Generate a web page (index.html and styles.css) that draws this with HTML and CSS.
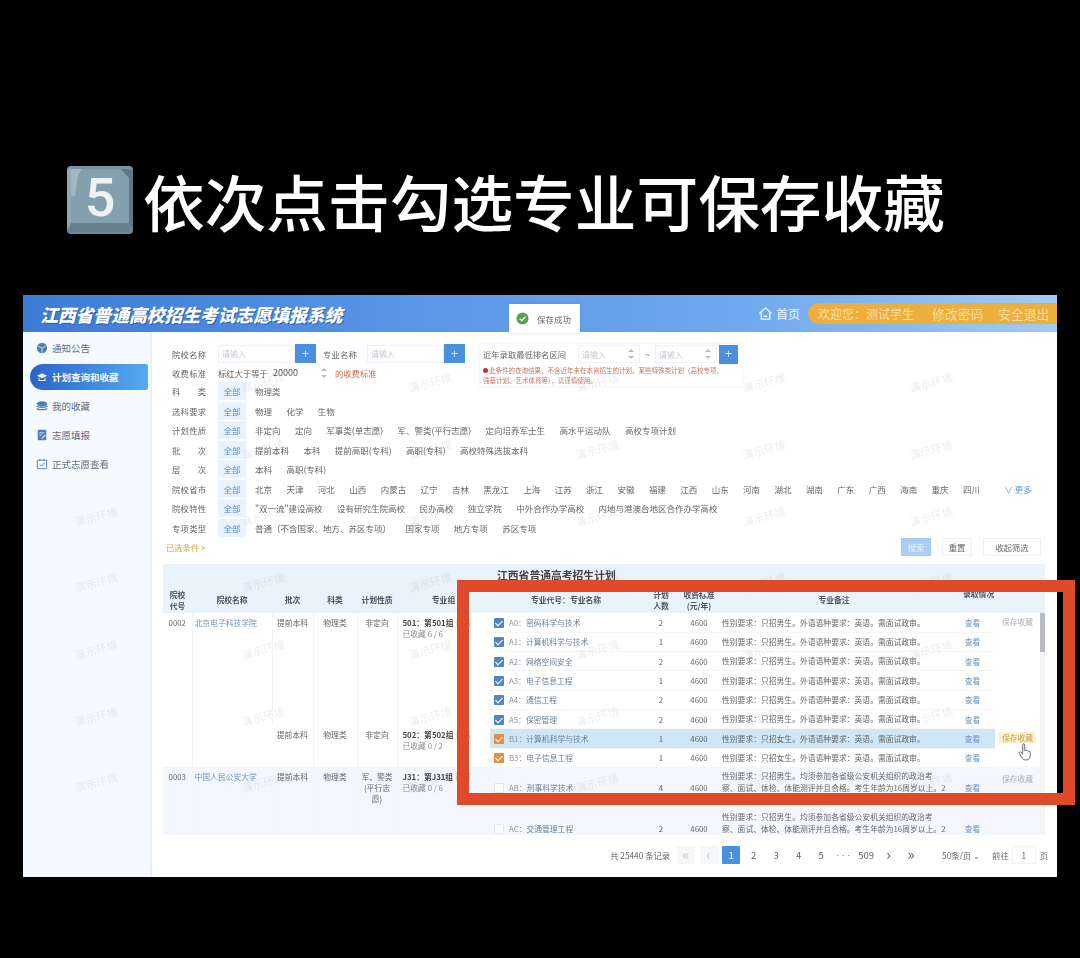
FILE: index.html
```html
<!DOCTYPE html>
<html lang="zh-CN">
<head>
  <meta charset="UTF-8">
  <meta name="viewport" content="width=device-width, initial-scale=1.0">
  <title>依次点击勾选专业可保存收藏</title>
  <link rel="stylesheet" href="styles.css">
</head>
<body>

<div class="caption">
  <div class="keycap">
    <svg viewBox="0 0 66 68" width="66" height="68">
      <rect width="66" height="68" rx="4" fill="#6f8997"/>
      <polygon points="0,4 4,0 4,57 0,64" fill="#92a8b4"/>
      <polygon points="66,4 62,4 62,57 66,64" fill="#5f7886"/>
      <polygon points="2,66 4,57 62,57 64,66" fill="#667f8d"/>
      <polygon points="4,0 62,0 66,2 62,4 4,4" fill="#7b94a2"/>
      <rect x="4" y="3" width="58" height="54" fill="#84a0ae"/>
      <polygon points="4,3 15,3 11,9 8,30 4,30" fill="#a4b8c2"/>
      <polygon points="62,3 62,12 54,3" fill="#5f7886"/>
    </svg>
    <span class="keycap-num">5</span>
  </div>
  <h1>依次点击勾选专业可保存收藏</h1>
</div>

<div class="screen">
  <header class="topbar">
    <div class="brand">江西省普通高校招生考试志愿填报系统</div>
    <div class="topbar-right">
      <a class="home">
        <svg viewBox="0 0 16 16" width="15" height="15" fill="none" stroke="#eef5ff" stroke-width="1.4"><path d="M1.5 8 8 2l6.500 6"/><path d="M3.500 7v7h9V7"/><path d="M6 11h4"/></svg>
        首页
      </a>
      <div class="userbar">
        <span>欢迎您：测试学生</span>
        <span>修改密码</span>
        <span>安全退出</span>
      </div>
    </div>
  </header>

  <div class="toast">
    <svg viewBox="0 0 14 14" width="13" height="13"><circle cx="7" cy="7" r="6.500" fill="#58a04a"/><path d="M4 7.200 6.200 9.400 10 5" fill="none" stroke="#fff" stroke-width="1.500"/></svg>
    保存成功
  </div>

  <div class="body">
    <nav class="sidebar">
      <a class="nav-item">
        <svg viewBox="0 0 14 14" width="12" height="12"><circle cx="7" cy="7" r="6" fill="#4f7fb5"/><path d="M2 4.500 7 7l5-2.500M7 7v6" fill="none" stroke="#dbe7f5" stroke-width="1"/></svg>
        通知公告
      </a>
      <a class="nav-item active">
        <svg viewBox="0 0 14 14" width="12" height="12"><path d="M1 5.500 7 2.500l6 3-6 3z" fill="#e6f0fc"/><path d="M3.500 8v3h7V8" fill="none" stroke="#e6f0fc" stroke-width="1.200"/></svg>
        计划查询和收藏
      </a>
      <a class="nav-item">
        <svg viewBox="0 0 14 14" width="12" height="12"><ellipse cx="7" cy="4.500" rx="6" ry="3" fill="#4f7fb5"/><path d="M1 7c1 2 11 2 12 0M1 9.800c1 2 11 2 12 0" fill="none" stroke="#4f7fb5" stroke-width="1.600"/></svg>
        我的收藏
      </a>
      <a class="nav-item">
        <svg viewBox="0 0 14 14" width="12" height="12"><rect x="2" y="1" width="10" height="12" rx="1" fill="#4f7fb5"/><path d="M4 4.500h6M4 7h3" stroke="#dbe7f5" stroke-width="1"/><path d="m7 11 4-4" stroke="#dbe7f5" stroke-width="1.400"/></svg>
        志愿填报
      </a>
      <a class="nav-item">
        <svg viewBox="0 0 14 14" width="12" height="12" fill="none" stroke="#5c7b9e" stroke-width="1.100"><rect x="1.500" y="2.500" width="11" height="10" rx="1"/><path d="m4.500 7.500 2 2 3.500-4M4.500 1v2.500M9.500 1v2.500"/></svg>
        正式志愿查看
      </a>
    </nav>

    <main class="main">
      <section class="filters">
        <div class="filters-top">
          <div class="search-rows">
            <div class="search-row">
              <label class="filter-label">院校名称</label>
              <div class="search-box"><span class="placeholder">请输入</span></div>
              <button class="plus">+</button>
              <label class="filter-label second">专业名称</label>
              <div class="search-box"><span class="placeholder">请输入</span></div>
              <button class="plus">+</button>
            </div>
            <div class="search-row">
              <label class="filter-label">收费标准</label>
              <span class="fee-text">标红大于等于</span>
              <span class="fee-value">20000</span>
              <span class="spin"></span>
              <span class="fee-tail">的收费标准</span>
            </div>
          </div>
          <div class="rank-panel">
            <div class="rank-row">
              <span class="rank-title">近年录取最低排名区间</span>
              <div class="rank-input"><span class="placeholder">请输入</span><span class="spin"></span></div>
              <span class="tilde">~</span>
              <div class="rank-input"><span class="placeholder">请输入</span><span class="spin"></span></div>
              <button class="plus">+</button>
            </div>
            <p class="rank-hint"><i class="dot"></i>此条件的查询结果，不含近年未在本省招生的计划。某些特殊类计划（高校专项、<br>强基计划、艺术体育等），请谨慎使用。</p>
          </div>
        </div>

        <div class="filter-row"><label class="filter-label">科类</label><span class="chip">全部</span><span>物理类</span></div>
        <div class="filter-row"><label class="filter-label">选科要求</label><span class="chip">全部</span><span>物理</span><span>化学</span><span>生物</span></div>
        <div class="filter-row"><label class="filter-label">计划性质</label><span class="chip">全部</span><span>非定向</span><span>定向</span><span>军事类(单志愿)</span><span>军、警类(平行志愿)</span><span>定向培养军士生</span><span>高水平运动队</span><span>高校专项计划</span></div>
        <div class="filter-row"><label class="filter-label">批次</label><span class="chip">全部</span><span>提前本科</span><span>本科</span><span>提前高职(专科)</span><span>高职(专科)</span><span>高校特殊选拔本科</span></div>
        <div class="filter-row"><label class="filter-label">层次</label><span class="chip">全部</span><span>本科</span><span>高职(专科)</span></div>
        <div class="filter-row"><label class="filter-label">院校省市</label><span class="chip">全部</span><span>北京</span><span>天津</span><span>河北</span><span>山西</span><span>内蒙古</span><span>辽宁</span><span>吉林</span><span>黑龙江</span><span>上海</span><span>江苏</span><span>浙江</span><span>安徽</span><span>福建</span><span>江西</span><span>山东</span><span>河南</span><span>湖北</span><span>湖南</span><span>广东</span><span>广西</span><span>海南</span><span>重庆</span><span>四川</span><a class="more">∨ 更多</a></div>
        <div class="filter-row"><label class="filter-label">院校特性</label><span class="chip">全部</span><span>"双一流"建设高校</span><span>设有研究生院高校</span><span>民办高校</span><span>独立学院</span><span>中外合作办学高校</span><span>内地与港澳台地区合作办学高校</span></div>
        <div class="filter-row"><label class="filter-label">专项类型</label><span class="chip">全部</span><span>普通（不含国家、地方、苏区专项）</span><span>国家专项</span><span>地方专项</span><span>苏区专项</span></div>

        <div class="actions">
          <a class="selected">已选条件 &gt;</a>
          <div class="action-btns">
            <button class="btn primary">搜索</button>
            <button class="btn">重置</button>
            <button class="btn wide">收起筛选</button>
          </div>
        </div>
      </section>

      <section class="plan">
        <div class="plan-title">江西省普通高考招生计划</div>
        <div class="plan-tables">
          <table class="groups">
            <colgroup><col class="c-code"><col class="c-school"><col class="c-batch"><col class="c-kind"><col class="c-nature"><col class="c-group"></colgroup>
            <thead>
              <tr><th>院校<br>代号</th><th>院校名称</th><th>批次</th><th>科类</th><th>计划性质</th><th>专业组</th></tr>
            </thead>
            <tbody>
              <tr class="g-first">
                <td rowspan="2">0002</td><td rowspan="2" class="school">北京电子科技学院</td>
                <td>提前本科</td><td>物理类</td><td>非定向</td>
                <td class="group"><b>501：第501组</b> <em>详情</em><small>已收藏 6 / 6</small></td>
              </tr>
              <tr class="g-second">
                <td>提前本科</td><td>物理类</td><td>非定向</td>
                <td class="group"><b>502：第502组</b> <em>详情</em><small>已收藏 0 / 2</small></td>
              </tr>
              <tr class="g-third">
                <td>0003</td><td class="school">中国人民公安大学</td>
                <td>提前本科</td><td>物理类</td><td>军、警类(平行志愿)</td>
                <td class="group"><b>J31：第J31组</b> <em>详情</em><small>已收藏 0 / 6</small></td>
              </tr>
            </tbody>
          </table>

          <table class="majors">
            <colgroup><col class="m-name"><col class="m-num"><col class="m-fee"><col class="m-note"><col class="m-view"><col class="m-save"><col class="m-bar"></colgroup>
            <thead>
              <tr><th>专业代号：专业名称</th><th>计划<br>人数</th><th>收费标准<br>(元/年)</th><th>专业备注</th><th class="th-result" colspan="2">录取情况</th><th></th></tr>
            </thead>
            <tbody>
              <tr class="m-row"><td class="name"><i class="check on"></i>A0：<span>密码科学与技术</span></td><td>2</td><td>4600</td><td class="note">性别要求：只招男生。外语语种要求：英语。需面试政审。</td><td class="view">查看</td><td rowspan="6" class="save"><a>保存收藏</a></td><td rowspan="10" class="bar"><i></i></td></tr>
              <tr class="m-row"><td class="name"><i class="check on"></i>A1：<span>计算机科学与技术</span></td><td>1</td><td>4600</td><td class="note">性别要求：只招男生。外语语种要求：英语。需面试政审。</td><td class="view">查看</td></tr>
              <tr class="m-row"><td class="name"><i class="check on"></i>A2：<span>网络空间安全</span></td><td>2</td><td>4600</td><td class="note">性别要求：只招男生。外语语种要求：英语。需面试政审。</td><td class="view">查看</td></tr>
              <tr class="m-row"><td class="name"><i class="check on"></i>A3：<span>电子信息工程</span></td><td>1</td><td>4600</td><td class="note">性别要求：只招男生。外语语种要求：英语。需面试政审。</td><td class="view">查看</td></tr>
              <tr class="m-row"><td class="name"><i class="check on"></i>A4：<span>通信工程</span></td><td>2</td><td>4600</td><td class="note">性别要求：只招男生。外语语种要求：英语。需面试政审。</td><td class="view">查看</td></tr>
              <tr class="m-row"><td class="name"><i class="check on"></i>A5：<span>保密管理</span></td><td>2</td><td>4600</td><td class="note">性别要求：只招男生。外语语种要求：英语。需面试政审。</td><td class="view">查看</td></tr>
              <tr class="m-row hover"><td class="name"><i class="check warm"></i>B1：<span>计算机科学与技术</span></td><td>1</td><td>4600</td><td class="note">性别要求：只招女生。外语语种要求：英语。需面试政审。</td><td class="view">查看</td><td rowspan="2" class="save hot"><a>保存收藏</a></td></tr>
              <tr class="m-row"><td class="name"><i class="check warm"></i>B3：<span>电子信息工程</span></td><td>1</td><td>4600</td><td class="note">性别要求：只招女生。外语语种要求：英语。需面试政审。</td><td class="view">查看</td></tr>
              <tr class="m-tall"><td class="name"><i class="check"></i>AB：<span>刑事科学技术</span></td><td>4</td><td>4600</td><td class="note">性别要求：只招男生。均须参加各省级公安机关组织的政治考<br>察、面试、体检、体能测评并且合格。考生年龄为16周岁以上。2</td><td class="view">查看</td><td rowspan="2" class="save"><a>保存收藏</a></td></tr>
              <tr class="m-tall short"><td class="name"><i class="check"></i>AC：<span>交通管理工程</span></td><td>2</td><td>4600</td><td class="note">性别要求：只招男生。均须参加各省级公安机关组织的政治考<br>察、面试、体检、体能测评并且合格。考生年龄为16周岁以上。2</td><td class="view">查看</td></tr>
            </tbody>
          </table>
        </div>
      </section>

      <footer class="pager">
        <span class="total">共 25440 条记录</span>
        <div class="pages">
          <a class="pg muted arrow">«</a><a class="pg muted arrow">‹</a><a class="pg current">1</a><a class="pg">2</a><a class="pg">3</a><a class="pg">4</a><a class="pg">5</a><a class="pg dots">•••</a><a class="pg">509</a><a class="pg arrow">›</a><a class="pg arrow">»</a>
        </div>
        <span class="page-size">50条/页 ⌄</span>
        <span class="goto">前往</span>
        <span class="goto-input">1</span>
        <span>页</span>
      </footer>
    </main>
  </div>

  <div class="watermarks">
    <span class="hidden">演示环境</span><span>演示环境</span><span>演示环境</span><span>演示环境</span><span>演示环境</span><span>演示环境</span>
    <span class="hidden">演示环境</span><span>演示环境</span><span>演示环境</span><span>演示环境</span><span>演示环境</span><span>演示环境</span>
    <span>演示环境</span><span>演示环境</span><span>演示环境</span><span>演示环境</span><span>演示环境</span><span>演示环境</span>
    <span>演示环境</span><span>演示环境</span><span>演示环境</span><span>演示环境</span><span>演示环境</span><span>演示环境</span>
    <span>演示环境</span><span>演示环境</span><span>演示环境</span><span>演示环境</span><span>演示环境</span><span>演示环境</span>
    <span>演示环境</span><span>演示环境</span><span>演示环境</span><span>演示环境</span><span>演示环境</span><span>演示环境</span>
    <span>演示环境</span><span>演示环境</span><span>演示环境</span><span>演示环境</span><span>演示环境</span><span>演示环境</span>
  </div>

  <svg class="cursor" viewBox="0 0 16 20" width="15" height="19">
    <path d="M5 2c0-1.500 2.200-1.500 2.200 0v6l.8-.3c.8-.4 1.500 0 1.700.5.800-.4 1.500 0 1.700.6.900-.3 1.600.2 1.600 1v3.200c0 2.800-1.500 5-4.500 5-2.200 0-3.400-.8-4.400-2.500L1.400 11c-.7-1.200.8-2.300 1.800-1.200L5 11.500z" fill="#fff" stroke="#56606b" stroke-width="1"/>
  </svg>
  <div class="red-frame"></div>
</div>

</body>
</html>
```

FILE: styles.css
```css
* { box-sizing: border-box; }
html, body { margin: 0; height: 958px; overflow: hidden; background: #000; }
body { font-family: "Noto Sans CJK SC", "Noto Sans", sans-serif; color: #666; font-size: 8.3px; }
a { color: inherit; }
i, em { font-style: normal; }

/* caption above the screenshot */
.caption { display: flex; align-items: center; gap: 10px; height: 68px; margin: 166px 0 0 67px; }
.keycap { position: relative; width: 66px; height: 68px; flex: none; }
.keycap svg { display: block; }
.keycap-num { position: absolute; inset: 0 0 6px 0; display: flex; align-items: center; justify-content: center; font: 500 54px Roboto, sans-serif; color: #eef2f4; }
h1 { margin: 0; color: #fff; font-size: 61.7px; font-weight: 500; line-height: 68px; white-space: nowrap; }

/* embedded screen */
.screen { position: relative; width: 1034px; height: 582px; margin: 61px 0 0 23px; background: #f4f8fd; filter: blur(.7px); }
.topbar { display: flex; justify-content: space-between; align-items: center; height: 37px; padding: 0 0 0 17px; background: linear-gradient(90deg, #3d7bd6 0%, #5f9be8 45%, #6ea9ef 70%, #a4cbf1 100%); }
.brand { color: #fff; font-size: 17.8px; font-weight: 900; font-style: italic; text-shadow: 1px 1px 0 #2a5ea8; white-space: nowrap; }
.topbar-right { display: flex; align-items: center; gap: 8px; }
.home { display: flex; align-items: center; gap: 3px; color: #eef5ff; font-size: 12px; }
.userbar { display: flex; gap: 18px; align-items: center; width: 249px; height: 21px; padding-left: 10px; border-radius: 11px 0 0 11px; background: #ecae3c; color: #f9dfa0; font-size: 12px; white-space: nowrap; }
.userbar span + span { font-size: 12.8px; }
.userbar span:last-child { margin-left: -3px; }
.toast { position: absolute; left: 486px; top: 9px; width: 71px; height: 29px; display: flex; align-items: center; gap: 8px; padding-left: 7px; background: #fff; color: #666; font-size: 8.5px; box-shadow: 0 0 4px rgba(60,90,130,.2); }

.body { display: flex; height: 545px; }
.sidebar { flex: none; width: 129px; padding-top: 1px; background: #f6faff; }
.nav-item { display: flex; align-items: center; gap: 4px; height: 26px; margin: 1.5px 4px 1.5px 7px; padding-left: 6px; font-size: 9.5px; color: #5f6b7a; }
.nav-item + .nav-item { margin-top: 3px; }
.active { border-radius: 13px 2px 2px 13px; background: linear-gradient(90deg, #2a64c8, #55aaf2); color: #eef6ff; font-weight: 700; }
.main { flex: 1; min-width: 0; padding: 12px 0 0 11px; background: #fff; box-shadow: -1px 0 2px rgba(100,130,170,.15); }

/* filter block */
.filters { padding-right: 16px; }
.filters-top { display: flex; height: 37.5px; }
.search-rows { flex: none; width: 303px; padding-left: 9px; }
.search-row { display: flex; align-items: center; height: 19px; }
.filter-label { flex: none; width: 34px; margin-right: 12px; color: #666; font-size: 8.3px; text-align: justify; text-align-last: justify; white-space: nowrap; }
.filter-label.second { margin-left: 7px; margin-right: 10px; }
.search-box { display: flex; align-items: center; width: 77px; height: 18px; padding-left: 3px; border: 1px solid #eef1f5; }
.placeholder { color: #c4c9d0; font-size: 8px; }
.plus { flex: none; width: 21px; height: 19px; padding: 0; border: 0; background: #4a90dd; color: #dcecff; font-size: 12px; line-height: 18px; }
.fee-text { width: 55px; color: #6d5a55; white-space: nowrap; }
.fee-value { width: 46px; color: #555; font-size: 9px; }
.spin { position: relative; display: inline-block; flex: none; width: 10px; height: 12px; }
.spin::before, .spin::after { content: ""; position: absolute; left: 2px; border: 3px solid transparent; }
.spin::before { top: -2px; border-bottom-color: #bbb; }
.spin::after { bottom: -2px; border-top-color: #bbb; }
.fee-tail { margin-left: 6px; color: #cb6f52; }
.rank-panel { flex: none; width: 262px; height: 42px; margin-left: 14px; padding: 0 3px; background: #fff; box-shadow: 0 0 3px rgba(120,140,170,.18); }
.rank-row { display: flex; align-items: center; height: 20px; }
.rank-title { width: 95px; white-space: nowrap; }
.rank-input { display: flex; justify-content: space-between; align-items: center; width: 62px; height: 18px; padding: 0 3px; border: 1px solid #f0f2f6; }
.tilde { width: 15px; text-align: center; }
.rank-row .plus { margin-left: 2px; width: 19px; }
.rank-hint { margin: 1px 0 0; color: #c9775f; font-size: 6.5px; line-height: 10px; white-space: nowrap; }
.dot { display: inline-block; width: 5px; height: 5px; margin-right: 1px; border-radius: 50%; background: #c22f2f; }
.filter-row { display: flex; align-items: center; gap: 14.4px; height: 19.5px; padding-left: 9px; font-size: 8.5px; white-space: nowrap; }
.filter-row .filter-label { margin-right: -2.4px; }
.chip { flex: none; width: 28px; height: 18px; margin-right: -5.4px; background: #eaf3fd; color: #4d8fdc; line-height: 18px; text-align: center; }
.more { margin-left: 10px; color: #5b9ae0; }
.actions { display: flex; justify-content: space-between; align-items: center; height: 19px; padding-left: 3px; }
.selected { color: #cfa64e; }
.action-btns { display: flex; gap: 11px; }
.btn { width: 30px; height: 18px; padding: 0; border: 1px solid #edf0f4; background: #fff; color: #666; font: 8.3px "Noto Sans CJK SC", sans-serif; }
.btn.primary { border: 0; background: #a9cdf3; color: #e9f3ff; }
.btn.wide { width: 58px; }

/* plan table */
.plan { margin: 7px 0 0 0; width: 882px; font-size: 7.8px; }
.plan-title { height: 23px; padding-left: 334px; background: #eaf2fb; color: #444; font-size: 10.8px; font-weight: 700; line-height: 23px; }
.plan-tables { display: flex; height: 248.5px; overflow: hidden; }
table { border-collapse: collapse; table-layout: fixed; }
th { height: 26.5px; padding: 0; background: #eaf2fb; color: #4b5563; font-size: 7.8px; font-weight: 700; line-height: 11px; text-align: center; }
td { padding: 0; text-align: center; }
.groups { flex: none; width: 327px; }
.c-code { width: 29px; } .c-school { width: 80px; } .c-batch { width: 41px; } .c-kind { width: 44px; } .c-nature { width: 40px; } .c-group { width: 93px; }
.groups td { padding: 4px 2px 0; border-left: 1px solid #f1f4f8; line-height: 11px; vertical-align: top; }
.groups td:first-child { border-left: 0; }
.school { color: #6d93bb; text-align: left; }
.g-first { height: 112px; }
.g-second { height: 42px; }
.g-third { height: 68px; background: #f3f7fd; }
.groups .group { padding-left: 5px; text-align: left; white-space: nowrap; }
.group b { color: #444; }
.group em { color: #e7b464; }
.group small { display: block; color: #888; font-size: 7.8px; }
.majors { flex: none; width: 555px; }
.m-name { width: 152px; } .m-num { width: 38px; } .m-fee { width: 38px; } .m-note { width: 232px; } .m-view { width: 45px; } .m-save { width: 45px; } .m-bar { width: 5px; }
.m-row { height: 19.3px; }
.m-row td { border-bottom: 1px solid #f4f6f9; }
.m-row.hover td { background: #cfe6f7; }
.m-row .save, .m-tall .save { background: #fff; border-bottom: 0; vertical-align: top; padding-top: 3px; }
.m-row.hover .save { background: #fff; }
.hot a { display: block; margin: 0 4px; background: #fbf2cf; color: #c9a04d; }
.save a { color: #aab0b7; white-space: nowrap; }
.hot a { color: #c9a04d; }
.m-tall { height: 38px; background: #f4f8fe; }
.m-tall.short { height: 30px; }
.m-tall td { vertical-align: bottom; padding-bottom: 12px; }
.m-tall.short td { padding-bottom: 1px; }
.m-tall .save { background: #f4f8fe; padding-top: 6px; }
.name { padding-left: 4px; color: #8a929c; text-align: left; white-space: nowrap; }
.name span { color: #6b7f99; }
.check { display: inline-block; width: 10px; height: 10px; margin-right: 5px; border: 1px solid #e3e6ea; border-radius: 1px; background: #fff; vertical-align: -2px; }
.check.on, .check.warm { position: relative; border: 0; background: #4f86c6; }
.check.warm { background: #e0913f; }
.check.on::after, .check.warm::after { content: ""; position: absolute; left: 3px; top: 1px; width: 3px; height: 6px; border: solid #fff; border-width: 0 1.2px 1.2px 0; transform: rotate(45deg); }
.note { padding-left: 4px; line-height: 11.5px; text-align: left; white-space: nowrap; }
.view { color: #6d93bb; }
.th-result { text-align: left; padding: 0 0 12px 13px; }
.bar { position: relative; background: #f4f5f7; vertical-align: top; }
.bar i { display: block; height: 39px; background: #b8bcc2; }

/* pager */
.pager { display: flex; align-items: center; justify-content: flex-end; height: 18px; margin-top: 11px; padding-right: 9px; color: #666; white-space: nowrap; }
.total { margin-right: 7px; }
.pages { display: flex; gap: 4.5px; }
.pg { width: 18px; height: 18px; background: #fff; font-size: 9.5px; line-height: 18px; text-align: center; }
.pg.arrow { font-size: 15px; line-height: 15px; color: #555; }
.pg.muted { background: #f6f7f9; color: #c4c7cc; }
.pg.dots { font-size: 5px; letter-spacing: .5px; color: #555; }
.pg.current { background: #4a90dd; color: #fff; border-radius: 1px; }
.page-size { width: 40px; margin: 0 10px 0 22px; }
.goto { margin-right: 3px; }
.goto-input { width: 24px; height: 18px; margin-right: 4px; border: 1px solid #f0f2f5; line-height: 17px; text-align: center; }

/* overlays */
.watermarks { position: absolute; left: -11px; top: 54px; display: grid; grid-template-columns: repeat(6, 167px); grid-auto-rows: 66.7px; pointer-events: none; }
.watermarks span { align-self: center; justify-self: center; color: rgba(120,130,150,.14); font-size: 11px; transform: rotate(-15deg); white-space: nowrap; }
.watermarks .hidden { visibility: hidden; }
.cursor { position: absolute; left: 995px; top: 448px; }
.red-frame { position: absolute; left: 434px; top: 285px; width: 618px; height: 225px; border: 12.5px solid #e04a2a; pointer-events: none; }
```
